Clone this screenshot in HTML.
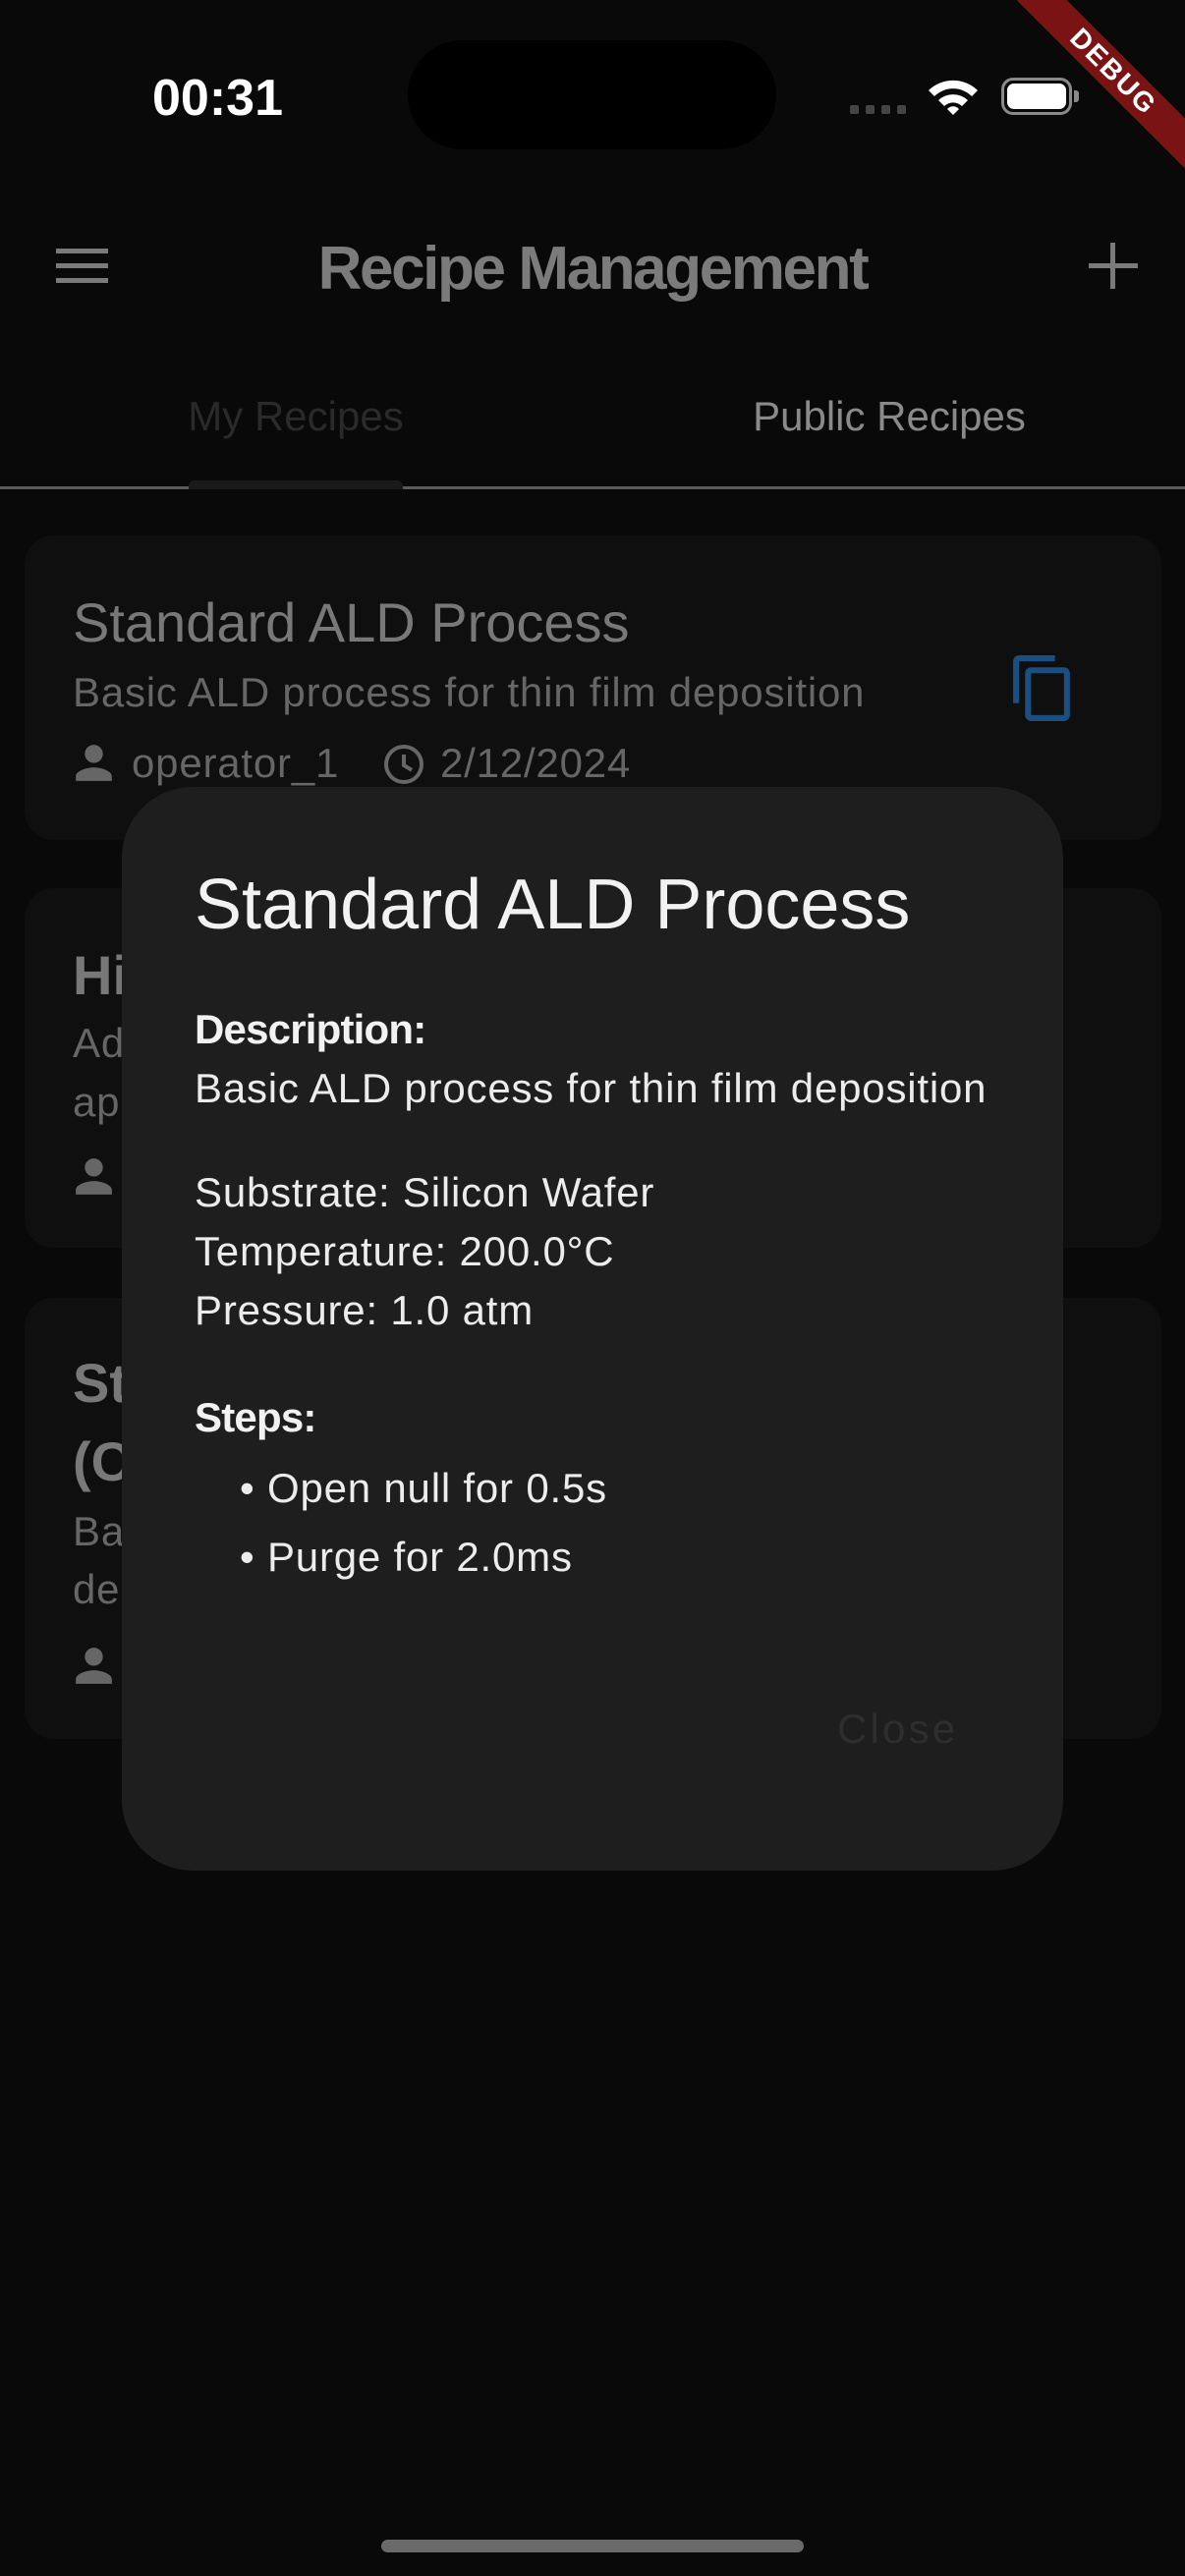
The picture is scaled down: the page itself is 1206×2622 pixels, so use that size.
<!DOCTYPE html>
<html><head><meta charset="utf-8"><style>
*{margin:0;padding:0;box-sizing:border-box}
body{width:1206px;height:2622px;background:#090909;position:relative;overflow:hidden;font-family:"Liberation Sans",sans-serif}
.a{position:absolute;line-height:1;white-space:nowrap}
.card{position:absolute;left:25px;width:1157px;background:#0f0f0f;border-radius:30px;overflow:hidden}
.ct{font-size:56px;color:#787878}
.cd{font-size:42px;color:#666;letter-spacing:0.8px}
.dt{font-size:42px;color:#ececec;letter-spacing:0.8px}
</style></head><body>
<!-- status bar -->
<div class="a" style="left:155px;top:74px;font-size:52px;font-weight:bold;color:#fff">00:31</div>
<div style="position:absolute;left:415px;top:41px;width:375px;height:111px;border-radius:56px;background:#000"></div>
<div style="position:absolute;left:865px;top:107px;width:9px;height:9px;border-radius:2px;background:#444"></div>
<div style="position:absolute;left:881px;top:107px;width:9px;height:9px;border-radius:2px;background:#444"></div>
<div style="position:absolute;left:897px;top:107px;width:9px;height:9px;border-radius:2px;background:#444"></div>
<div style="position:absolute;left:913px;top:107px;width:9px;height:9px;border-radius:2px;background:#444"></div>
<svg style="position:absolute;left:943px;top:78px" width="54" height="40" viewBox="0 0 54 40"><path d="M2 14 A36 36 0 0 1 52 14 L46 20 A27 27 0 0 0 8 20 Z" fill="#fff"/><path d="M12 24 A22 22 0 0 1 42 24 L36 30 A13 13 0 0 0 18 30 Z" fill="#fff"/><path d="M21 33 A8 8 0 0 1 33 33 L27 39 Z" fill="#fff"/></svg>
<div style="position:absolute;left:1019px;top:79px;width:72px;height:38px;border:3px solid #8a8a8a;border-radius:12px"></div>
<div style="position:absolute;left:1025px;top:85px;width:60px;height:26px;border-radius:7px;background:#fff"></div>
<div style="position:absolute;left:1093px;top:92px;width:5px;height:12px;border-radius:0 3px 3px 0;background:#8a8a8a"></div>
<div style="position:absolute;left:933px;top:55px;width:400px;height:36px;background:#7a1414;transform:rotate(45deg);text-align:center;color:#fff;font-weight:bold;font-size:28px;line-height:36px;letter-spacing:2px">DEBUG</div>
<!-- app bar -->
<div style="position:absolute;left:57px;top:253px;width:53px;height:5px;background:#7a7a7a"></div>
<div style="position:absolute;left:57px;top:268px;width:53px;height:5px;background:#7a7a7a"></div>
<div style="position:absolute;left:57px;top:283px;width:53px;height:5px;background:#7a7a7a"></div>
<div class="a" style="left:0;width:1206px;text-align:center;top:243px;font-size:62px;font-weight:bold;letter-spacing:-2.4px;color:#7b7b7b">Recipe Management</div>
<div style="position:absolute;left:1108px;top:268px;width:50px;height:5px;background:#7a7a7a"></div>
<div style="position:absolute;left:1130px;top:247px;width:5px;height:47px;background:#7a7a7a"></div>
<!-- tabs -->
<div class="a" style="left:101px;width:400px;text-align:center;top:403px;font-size:42px;color:#2a2a2a">My Recipes</div>
<div class="a" style="left:705px;width:400px;text-align:center;top:403px;font-size:42px;color:#8a8a8a">Public Recipes</div>
<div style="position:absolute;left:0;top:495px;width:1206px;height:3px;background:#5a5a5a"></div>
<div style="position:absolute;left:192px;top:489px;width:218px;height:9px;background:#1a1a1a;border-radius:6px 6px 0 0"></div>
<!-- card 1 -->
<div class="card" style="top:545px;height:310px"></div>
<div class="a ct" style="left:74px;top:606px">Standard ALD Process</div>
<div class="a cd" style="left:74px;top:684px">Basic ALD process for thin film deposition</div>
<svg style="position:absolute;left:68px;top:749px" width="55" height="55" viewBox="0 0 24 24"><path fill="#666" d="M12 12c2.21 0 4-1.79 4-4s-1.79-4-4-4-4 1.79-4 4 1.79 4 4 4zm0 2c-2.67 0-8 1.34-8 4v2h16v-2c0-2.66-5.33-4-8-4z"/></svg>
<div class="a cd" style="left:134px;top:756px">operator_1</div>
<svg style="position:absolute;left:387px;top:754px" width="48" height="48" viewBox="0 0 24 24"><circle cx="12" cy="12" r="9" fill="none" stroke="#666" stroke-width="2"/><path d="M12 7v5.5l4 2.4" fill="none" stroke="#666" stroke-width="2"/></svg>
<div class="a cd" style="left:448px;top:756px">2/12/2024</div>
<svg style="position:absolute;left:1025px;top:664px" width="73" height="73" viewBox="0 0 24 24"><path fill="#1b4f80" d="M16 1H4c-1.1 0-2 .9-2 2v14h2V3h12V1zm3 4H8c-1.1 0-2 .9-2 2v14c0 1.1.9 2 2 2h11c1.1 0 2-.9 2-2V7c0-1.1-.9-2-2-2zm0 16H8V7h11v14z"/></svg>
<!-- card 2 -->
<div class="card" style="top:904px;height:366px"></div>
<div class="a ct" style="left:74px;top:965px;font-weight:bold">High Temperature ALD</div>
<div class="a cd" style="left:74px;top:1041px">Advanced ALD process for high temperature</div>
<div class="a cd" style="left:74px;top:1101px">applications</div>
<svg style="position:absolute;left:68px;top:1170px" width="55" height="55" viewBox="0 0 24 24"><path fill="#666" d="M12 12c2.21 0 4-1.79 4-4s-1.79-4-4-4-4 1.79-4 4 1.79 4 4 4zm0 2c-2.67 0-8 1.34-8 4v2h16v-2c0-2.66-5.33-4-8-4z"/></svg>
<!-- card 3 -->
<div class="card" style="top:1321px;height:449px"></div>
<div class="a ct" style="left:74px;top:1380px;font-weight:bold">Standard ALD Process</div>
<div class="a ct" style="left:74px;top:1460px;font-weight:bold">(Copy)</div>
<div class="a cd" style="left:74px;top:1538px">Basic ALD process for thin film</div>
<div class="a cd" style="left:74px;top:1597px">deposition</div>
<svg style="position:absolute;left:68px;top:1668px" width="55" height="55" viewBox="0 0 24 24"><path fill="#666" d="M12 12c2.21 0 4-1.79 4-4s-1.79-4-4-4-4 1.79-4 4 1.79 4 4 4zm0 2c-2.67 0-8 1.34-8 4v2h16v-2c0-2.66-5.33-4-8-4z"/></svg>
<!-- dialog -->
<div style="position:absolute;left:124px;top:801px;width:958px;height:1103px;border-radius:72px;background:#1e1e1e"></div>
<div class="a" style="left:198px;top:885px;font-size:72px;color:#f2f2f2">Standard ALD Process</div>
<div class="a" style="left:198px;top:1027px;font-size:42px;font-weight:bold;letter-spacing:-0.8px;color:#f2f2f2">Description:</div>
<div class="a dt" style="left:198px;top:1087px">Basic ALD process for thin film deposition</div>
<div class="a dt" style="left:198px;top:1193px">Substrate: Silicon Wafer</div>
<div class="a dt" style="left:198px;top:1253px">Temperature: 200.0°C</div>
<div class="a dt" style="left:198px;top:1313px">Pressure: 1.0 atm</div>
<div class="a" style="left:198px;top:1422px;font-size:42px;font-weight:bold;letter-spacing:-0.8px;color:#f2f2f2">Steps:</div>
<div class="a dt" style="left:244px;top:1494px">• Open null for 0.5s</div>
<div class="a dt" style="left:244px;top:1564px">• Purge for 2.0ms</div>
<div class="a" style="left:852px;top:1739px;font-size:42px;letter-spacing:3.2px;color:#2e2e2e">Close</div>
<!-- home indicator -->
<div style="position:absolute;left:388px;top:2585px;width:430px;height:13px;border-radius:7px;background:#6a6a6a"></div>
</body></html>
